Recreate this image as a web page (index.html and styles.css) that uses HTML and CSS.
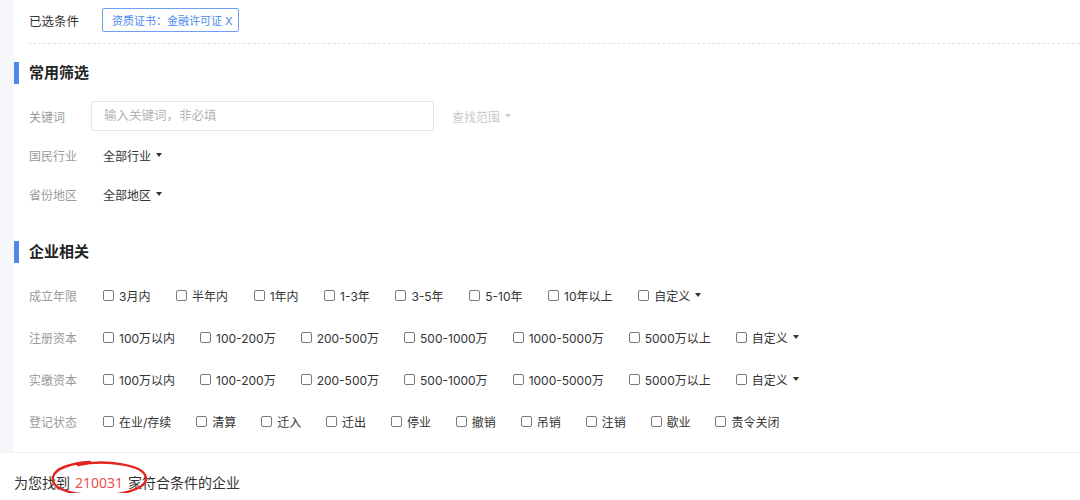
FILE: index.html
```html
<!DOCTYPE html>
<html lang="zh-CN">
<head>
<meta charset="utf-8">
<title>企业筛选</title>
<link rel="stylesheet" href="styles.css">
</head>
<body>
<div class="panel">
  <div class="selected-row">
    <span class="label dark">已选条件</span>
    <span class="tag">资质证书：金融许可证 X</span>
  </div>

  <section class="group">
    <h2 class="group-title">常用筛选</h2>
    <div class="fields first">
      <div class="field">
        <span class="label">关键词</span>
        <div class="keyword-input">输入关键词，非必填</div>
        <span class="scope">查找范围 <i class="caret light"></i></span>
      </div>
      <div class="field">
        <span class="label">国民行业</span>
        <span class="dropdown">全部行业 <i class="caret"></i></span>
      </div>
      <div class="field">
        <span class="label">省份地区</span>
        <span class="dropdown">全部地区 <i class="caret"></i></span>
      </div>
    </div>
  </section>

  <section class="group group-2">
    <h2 class="group-title">企业相关</h2>
    <div class="options">
      <div class="field">
        <span class="label">成立年限</span>
        <div class="opt-list years">
          <span class="opt"><i class="box"></i>3月内</span>
          <span class="opt"><i class="box"></i>半年内</span>
          <span class="opt"><i class="box"></i>1年内</span>
          <span class="opt"><i class="box"></i>1-3年</span>
          <span class="opt"><i class="box"></i>3-5年</span>
          <span class="opt"><i class="box"></i>5-10年</span>
          <span class="opt"><i class="box"></i>10年以上</span>
          <span class="opt"><i class="box"></i>自定义 <i class="caret"></i></span>
        </div>
      </div>
      <div class="field">
        <span class="label">注册资本</span>
        <div class="opt-list wide">
          <span class="opt"><i class="box"></i>100万以内</span>
          <span class="opt"><i class="box"></i>100-200万</span>
          <span class="opt"><i class="box"></i>200-500万</span>
          <span class="opt"><i class="box"></i>500-1000万</span>
          <span class="opt"><i class="box"></i>1000-5000万</span>
          <span class="opt"><i class="box"></i>5000万以上</span>
          <span class="opt"><i class="box"></i>自定义 <i class="caret"></i></span>
        </div>
      </div>
      <div class="field">
        <span class="label">实缴资本</span>
        <div class="opt-list wide">
          <span class="opt"><i class="box"></i>100万以内</span>
          <span class="opt"><i class="box"></i>100-200万</span>
          <span class="opt"><i class="box"></i>200-500万</span>
          <span class="opt"><i class="box"></i>500-1000万</span>
          <span class="opt"><i class="box"></i>1000-5000万</span>
          <span class="opt"><i class="box"></i>5000万以上</span>
          <span class="opt"><i class="box"></i>自定义 <i class="caret"></i></span>
        </div>
      </div>
      <div class="field">
        <span class="label">登记状态</span>
        <div class="opt-list status">
          <span class="opt"><i class="box"></i>在业/存续</span>
          <span class="opt"><i class="box"></i>清算</span>
          <span class="opt"><i class="box"></i>迁入</span>
          <span class="opt"><i class="box"></i>迁出</span>
          <span class="opt"><i class="box"></i>停业</span>
          <span class="opt"><i class="box"></i>撤销</span>
          <span class="opt"><i class="box"></i>吊销</span>
          <span class="opt"><i class="box"></i>注销</span>
          <span class="opt"><i class="box"></i>歇业</span>
          <span class="opt"><i class="box"></i>责令关闭</span>
        </div>
      </div>
    </div>
  </section>
</div>

<div class="result">
  为您找到<span class="count">210031</span>家符合条件的企业
  <svg class="mark" width="100" height="40" viewBox="0 0 100 40" aria-hidden="true">
    <path d="M28 6 C 56 0, 95 6, 96 19 C 97 32, 62 38, 40 36 C 14 34, 1 28, 3 18 C 5 9, 22 4, 40 3" fill="none" stroke="#e3231d" stroke-width="2.4" stroke-linecap="round"/>
  </svg>
</div>
</body>
</html>
```

FILE: styles.css
```css
html, body {
  margin: 0;
  padding: 0;
  background: #ffffff;
}

body {
  font-family: "Inter", "Noto Sans CJK SC", sans-serif;
  font-size: 12px;
  color: #333333;
}

.panel {
  border-left: 14px solid #f5f7fa;
  border-bottom: 1px solid #f0f0f0;
  padding-bottom: 16px;
}

.selected-row {
  display: flex;
  align-items: center;
  height: 40px;
  margin-left: 14px;
  padding-left: 1px;
  padding-bottom: 3px;
  border-bottom: 1px dashed #e2e2e2;
}

.label {
  width: 62px;
  flex: none;
  color: #9a9a9a;
  font-size: 12px;
}

.label.dark {
  color: #333333;
  width: 73px;
  font-size: 12.5px;
}

.tag {
  display: inline-flex;
  align-items: center;
  height: 22px;
  padding: 0 5px 0 9px;
  border: 1px solid #6f9ff5;
  border-radius: 2px;
  color: #4d89ef;
  font-size: 11px;
}

.group-title {
  margin: 18px 0 0;
  height: 22px;
  line-height: 22px;
  border-left: 5px solid #4f87ec;
  padding-left: 10px;
  font-size: 15px;
  font-weight: bold;
  color: #222222;
}

.group-2 .group-title {
  margin-top: 32px;
}

.fields,
.options {
  display: flex;
  flex-direction: column;
  padding-left: 15px;
  margin-top: 17px;
}

.fields {
  gap: 9px;
}

.options {
  gap: 12px;
}

.field {
  display: flex;
  align-items: center;
  height: 30px;
}

.keyword-input {
  box-sizing: border-box;
  width: 343px;
  height: 30px;
  line-height: 28px;
  border: 1px solid #e6e6e6;
  border-radius: 3px;
  padding-left: 12px;
  color: #b4b4b4;
  font-size: 12.5px;
}

.scope {
  margin-left: 18px;
  color: #c8c8c8;
  display: inline-flex;
  align-items: center;
}

.dropdown {
  padding-left: 12px;
  display: inline-flex;
  align-items: center;
  color: #333333;
}

.caret {
  display: inline-block;
  width: 0;
  height: 0;
  margin-left: 5px;
  border-left: 3.5px solid transparent;
  border-right: 3.5px solid transparent;
  border-top: 4px solid #333333;
}

.caret.light {
  border-top-color: #cccccc;
}

.opt-list {
  display: flex;
  align-items: center;
  padding-left: 12px;
  gap: 25px;
}

.opt-list.years {
  gap: 25.6px;
}

.opt-list.wide {
  gap: 25px;
}

.opt-list.status {
  gap: 24.9px;
}

.opt {
  display: inline-flex;
  align-items: center;
  white-space: nowrap;
  color: #333333;
}

.box {
  box-sizing: border-box;
  width: 11px;
  height: 11px;
  border: 1px solid #7a7a7a;
  border-radius: 2px;
  margin-right: 5px;
  flex: none;
}

.result {
  position: relative;
  padding: 20px 0 0 14px;
  line-height: 20px;
  font-size: 14px;
  color: #333333;
  font-family: "Noto Sans", "Noto Sans CJK SC", sans-serif;
}

.count {
  color: #ef4f4f;
  margin: 0 5px;
}

.mark {
  position: absolute;
  left: 50px;
  top: 6px;
}
```
